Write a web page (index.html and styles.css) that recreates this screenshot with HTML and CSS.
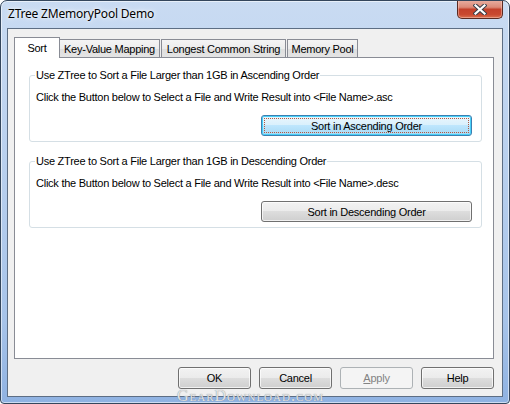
FILE: index.html
```html
<!DOCTYPE html>
<html>
<head>
<meta charset="utf-8">
<title>ZTree ZMemoryPool Demo</title>
<link rel="stylesheet" href="styles.css">
</head>
<body>
<div class="window">
  <div class="titlebar">
    <span class="title">ZTree ZMemoryPool Demo</span>
  </div>
  <div class="close">
    <svg width="14" height="11" viewBox="0 0 14 11">
      <path d="M2.5 1.5 L11.5 9.5 M11.5 1.5 L2.5 9.5" stroke="#3a3f4a" stroke-width="4.2" stroke-linecap="square" fill="none"/>
      <path d="M2.5 1.5 L11.5 9.5 M11.5 1.5 L2.5 9.5" stroke="#ffffff" stroke-width="2.2" stroke-linecap="square" fill="none"/>
    </svg>
  </div>
  <div class="client">
    <div class="tabctl">
      <div class="tabstrip">
        <div class="tab active">Sort</div>
        <div class="tab t-kv">Key-Value Mapping</div>
        <div class="tab t-lcs">Longest Common String</div>
        <div class="tab t-mp">Memory Pool</div>
      </div>
      <div class="pane">
        <div class="group">
          <span class="legend">Use ZTree to Sort a File Larger than 1GB in Ascending Order</span>
          <div class="line">Click the Button below to Select a File and Write Result into &lt;File Name&gt;.asc</div>
          <div class="btnrow"><div class="btn wide default"><span class="focus">Sort in Ascending Order</span></div></div>
        </div>
        <div class="group second">
          <span class="legend">Use ZTree to Sort a File Larger than 1GB in Descending Order</span>
          <div class="line">Click the Button below to Select a File and Write Result into &lt;File Name&gt;.desc</div>
          <div class="btnrow"><div class="btn wide">Sort in Descending Order</div></div>
        </div>
      </div>
    </div>
    <div class="buttons">
      <div class="btn">OK</div>
      <div class="btn">Cancel</div>
      <div class="btn disabled"><u>A</u>pply</div>
      <div class="btn">Help</div>
    </div>
  </div>
  <div class="watermark">GearDownload.com</div>
</div>
</body>
</html>
```

FILE: styles.css
```css
html, body {
  margin: 0;
  padding: 0;
  background: #ffffff;
}

.window {
  position: relative;
  width: 510px;
  height: 404px;
  box-sizing: border-box;
  border: 1px solid #34465c;
  border-radius: 7px 7px 4px 4px;
  padding: 0 6px 6px 6px;
  background: linear-gradient(to bottom, #c9dbf2 0%, #b9d0ee 40%, #a6c3e9 80%, #8fb2e2 100%);
  box-shadow: inset 0 0 0 1px rgba(255, 255, 255, 0.55);
  font-family: "Liberation Sans", Arial, sans-serif;
  font-size: 11px;
  letter-spacing: -0.25px;
  color: #000;
  overflow: hidden;
}

.titlebar {
  height: 27px;
  display: flex;
  align-items: center;
  padding-left: 1px;
}

.title {
  font-family: "Noto Sans", "Open Sans", sans-serif;
  font-size: 12px;
  letter-spacing: -0.2px;
  color: #000;
  text-shadow: 0 0 6px #ffffff, 0 0 3px #ffffff;
  margin-top: -2px;
}

.close {
  position: absolute;
  top: -1px;
  right: 6px;
  width: 44px;
  height: 18px;
  border: 1px solid #5a2a22;
  border-top: none;
  border-radius: 0 0 5px 5px;
  background: linear-gradient(to bottom, #e9b0a3 0%, #dc8a78 40%, #c4412b 52%, #c9482f 80%, #d9704f 100%);
  box-shadow: inset 0 0 0 1px rgba(255, 210, 200, 0.45);
  display: flex;
  align-items: center;
  justify-content: center;
}

.close svg {
  display: block;
  margin-top: 1px;
}

.client {
  height: 369px;
  box-sizing: border-box;
  border: 1px solid #5d6e84;
  background: #f0f0f0;
  padding: 8px 8px 0 6px;
  display: flex;
  flex-direction: column;
}

.tabctl {
  display: flex;
  flex-direction: column;
}

.tabstrip {
  display: flex;
  align-items: flex-end;
  height: 20px;
  position: relative;
  z-index: 1;
}

.tab {
  box-sizing: border-box;
  height: 18px;
  border: 1px solid #898c95;
  border-bottom: none;
  background: linear-gradient(to bottom, #f4f4f4 0%, #ececec 50%, #dedede 51%, #e4e4e4 100%);
  display: flex;
  align-items: center;
  justify-content: center;
  padding-top: 1px;
  white-space: nowrap;
}

.tab.active {
  width: 46px;
  height: 21px;
  margin-bottom: -1px;
  background: #ffffff;
  padding-top: 0;
  padding-bottom: 1px;
}

.t-kv {
  width: 100px;
  border-left: none;
}

.t-lcs {
  width: 125px;
  margin-left: 1px;
}

.t-mp {
  width: 71px;
  margin-left: 1px;
}

.pane {
  box-sizing: border-box;
  width: 480px;
  height: 302px;
  border: 1px solid #898c95;
  background: #ffffff;
  padding: 17px 11px 0 14px;
  display: flex;
  flex-direction: column;
}

.group {
  position: relative;
  border: 1px solid #d5dfe5;
  border-radius: 3px;
  padding: 15px 9px 5px 6px;
  display: flex;
  flex-direction: column;
}

.group.second {
  margin-top: 19px;
}

.legend {
  position: absolute;
  top: -7px;
  left: 5px;
  background: #ffffff;
  padding: 0 1px;
  line-height: 13px;
  white-space: nowrap;
}

.line {
  line-height: 13px;
  white-space: nowrap;
}

.btnrow {
  display: flex;
  justify-content: flex-end;
  margin-top: 11px;
}

.btn {
  box-sizing: border-box;
  width: 73px;
  height: 22px;
  border: 1px solid #707070;
  border-radius: 3px;
  background: linear-gradient(to bottom, #f2f2f2 0%, #ebebeb 49%, #dddddd 50%, #cfcfcf 100%);
  box-shadow: inset 0 0 0 1px rgba(255, 255, 255, 0.7);
  display: flex;
  align-items: center;
  justify-content: center;
  white-space: nowrap;
}

.btn.wide {
  width: 211px;
  height: 21px;
}

.btn.default {
  border-color: #3c7fb1;
  background: linear-gradient(to bottom, #eaf6fd 0%, #d9f0fc 49%, #bee6fd 50%, #a7d9f5 100%);
  box-shadow: inset 0 0 0 1px #48d0f8;
  padding: 2px;
}

.focus {
  flex: 1;
  align-self: stretch;
  display: flex;
  align-items: center;
  justify-content: center;
  border: 1px dotted #b05a40;
}

.btn.disabled {
  border-color: #adb2b5;
  background: #f4f4f4;
  box-shadow: none;
  color: #838383;
}

.buttons {
  display: flex;
  justify-content: flex-end;
  gap: 8px;
  margin-top: 8px;
  padding-right: 0;
}

.watermark {
  position: absolute;
  left: 176px;
  top: 386px;
  font-family: "Liberation Serif", serif;
  font-variant: small-caps;
  font-size: 16px;
  letter-spacing: 1px;
  color: #e4e4e4;
  text-shadow: 0 0 1px #6f7a86;
  white-space: nowrap;
}
```
